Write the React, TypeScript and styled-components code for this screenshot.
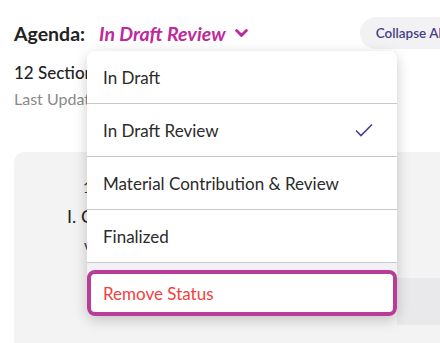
import { createGlobalStyle } from "styled-components";
import styled from "styled-components";

const GlobalStyle = createGlobalStyle`
    body {
        margin: 0;
        background: #ffffff;
        font-family: Lato, "Open Sans", sans-serif;
        color: #222222;
        overflow: hidden;
    }
`;

const STATUSES = ["In Draft", "In Draft Review", "Material Contribution & Review", "Finalized"];

export default function App() {
    const current = "In Draft Review";

    return (
        <Styled.Root>
            <GlobalStyle />
            <Styled.Header>
                <Styled.Title>
                    Agenda:
                    <StatusTrigger>
                        {current}
                        <svg width="13" height="9" viewBox="0 0 13 9">
                            <path d="M1.6 1.6 L6.5 6.6 L11.4 1.6" fill="none" stroke="#c0289c" strokeWidth="2.8" strokeLinecap="round" strokeLinejoin="round" />
                        </svg>
                    </StatusTrigger>
                </Styled.Title>
                <CollapseButton>Collapse All</CollapseButton>
            </Styled.Header>
            <SubTitle>12 Sections</SubTitle>
            <Updated>Last Updated Jan 12, 2024</Updated>

            <Card>
                <SectionCount>12 Sections</SectionCount>
                <SectionTitle>I. Call to Order</SectionTitle>
                <SectionToggle>v</SectionToggle>
                <HoverBand />
            </Card>

            <Menu>
                {STATUSES.map((status) => (
                    <MenuItem key={status}>
                        {status}
                        {status === current && (
                            <svg width="18" height="14" viewBox="0 0 18 14">
                                <path d="M1 7.5 L6 12.5 L17 1.5" fill="none" stroke="#4b3d8f" strokeWidth="1.6" />
                            </svg>
                        )}
                    </MenuItem>
                ))}
                <MenuFooter>
                    <RemoveItem>Remove Status</RemoveItem>
                </MenuFooter>
            </Menu>
        </Styled.Root>
    );
}

const Styled = {
    Root: styled.div`
        position: relative;
        width: 461px;
        height: 343px;
        padding: 17px 0 0 14px;
        box-sizing: border-box;
    `,
    Header: styled.div`
        display: flex;
        align-items: center;
        justify-content: space-between;
        height: 32px;
    `,
    Title: styled.h1`
        display: flex;
        align-items: center;
        gap: 14px;
        margin: 0;
        font-size: 19.5px;
        font-weight: 700;
        color: #222222;
    `,
};

const StatusTrigger = styled.span`
    display: flex;
    align-items: center;
    gap: 9px;
    color: #c0289c;
    font-style: italic;
    font-weight: 700;
    & svg {
        margin-top: 1px;
    }
`;

const CollapseButton = styled.button`
    height: 32px;
    padding: 0 16px;
    border: none;
    border-radius: 16px;
    background: #f2f2f4;
    color: #46408a;
    font-family: Lato, sans-serif;
    font-size: 13.5px;
    font-weight: 600;
    white-space: nowrap;
`;

const SubTitle = styled.div`
    margin-top: 14px;
    height: 20px;
    font-size: 17px;
    font-weight: 500;
    line-height: 20px;
    color: #222222;
`;

const Updated = styled.div`
    margin-top: 6px;
    height: 19px;
    font-size: 16px;
    line-height: 19px;
    color: #8a8a8a;
`;

const Card = styled.div`
    position: relative;
    margin-top: 44px;
    height: 260px;
    padding: 26px 0 0 53px;
    box-sizing: border-box;
    background: #f3f3f3;
    border-radius: 10px;
    overflow: hidden;
`;

const SectionCount = styled.div`
    padding-left: 16px;
    font-size: 15px;
    line-height: 18px;
    color: #333333;
`;

const SectionTitle = styled.div`
    margin-top: 9px;
    font-size: 18px;
    line-height: 22px;
    color: #222222;
`;

const SectionToggle = styled.div`
    margin-top: 10px;
    padding-left: 17px;
    font-size: 13px;
    font-weight: 700;
    color: #4b3d8f;
`;

const HoverBand = styled.div`
    position: absolute;
    left: 383px;
    right: 0;
    top: 126px;
    height: 47px;
    background: #e9e9eb;
`;

const Menu = styled.div`
    position: absolute;
    left: 87px;
    top: 51px;
    width: 310px;
    background: #ffffff;
    border-radius: 8px;
    box-shadow: 0 4px 14px rgba(0, 0, 0, 0.2);
`;

const MenuItem = styled.div`
    display: flex;
    align-items: center;
    justify-content: space-between;
    height: 52px;
    padding: 0 24px 0 16px;
    border-bottom: 1px solid #c9c9cb;
    font-size: 17px;
    color: #2b2b2b;
`;

const MenuFooter = styled.div`
    padding-top: 7px;
    background: #f1f1f6;
    border-radius: 0 0 8px 8px;
`;

const RemoveItem = styled.div`
    display: flex;
    align-items: center;
    height: 38px;
    padding-left: 12px;
    border: 4px solid #b93d98;
    border-radius: 8px;
    background: #ffffff;
    font-size: 17px;
    color: #f2403c;
`;
